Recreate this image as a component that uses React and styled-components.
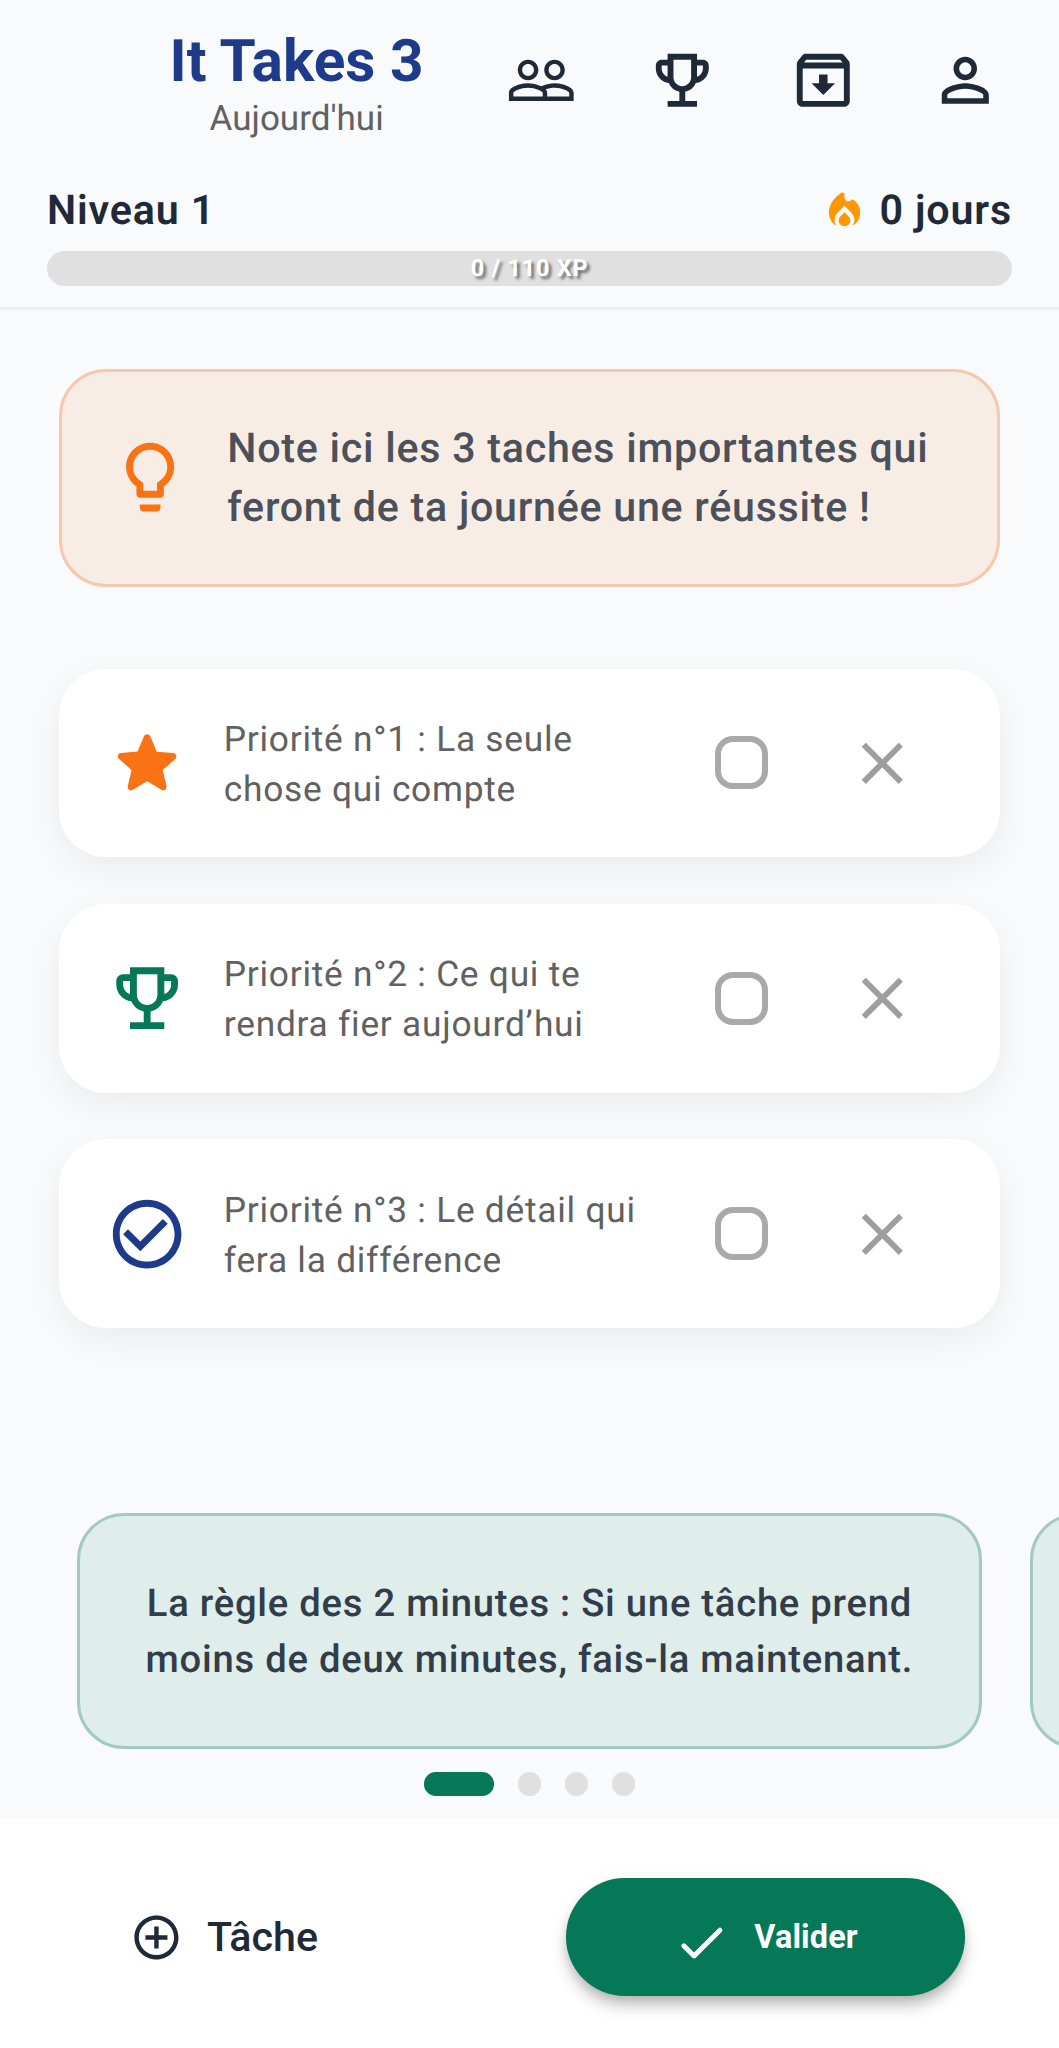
import React from "react";
import styled, { createGlobalStyle } from "styled-components";
import {
  MdPeopleOutline,
  MdOutlineEmojiEvents,
  MdOutlineArchive,
  MdPersonOutline,
  MdLightbulbOutline,
  MdCheckCircleOutline,
  MdClose,
  MdAddCircleOutline,
} from "react-icons/md";

const color = {
  page: "#f9fafc",
  ink: "#1f2937",
  blue: "#1e3a8a",
  green: "#047857",
  orange: "#f97316",
  muted: "#616161",
  track: "#e0e0e0",
};

const GlobalStyle = createGlobalStyle`
  *, *::before, *::after { box-sizing: border-box; }
  body {
    margin: 0;
    background: ${color.page};
    color: ${color.ink};
    font-family: Roboto, "Liberation Sans", sans-serif;
    text-rendering: geometricPrecision;
  }
  svg { display: block; flex: none; }
  button {
    border: 0;
    padding: 0;
    background: none;
    color: inherit;
    font: inherit;
  }
`;

const Screen = styled.div`
  display: flex;
  flex-direction: column;
  width: 100%;
  height: 2048px;
  overflow: hidden;
`;

const Header = styled.header`
  flex: none;
  height: 310px;
  border-bottom: 3px solid #eceef0;
`;

const TopBar = styled.div`
  display: flex;
  align-items: center;
  justify-content: space-between;
  height: 161px;
  padding-right: 23.5px;
`;

const TitleBlock = styled.div`
  flex: 1;
  display: flex;
  flex-direction: column;
  align-items: center;
  padding: 8.5px 0 0 122.5px;
`;

const Title = styled.h1`
  margin: 0;
  font-size: 58.6px;
  line-height: 69px;
  font-weight: 700;
  color: ${color.blue};
`;

const Subtitle = styled.div`
  margin-top: -1.5px;
  font-size: 35px;
  line-height: 47px;
  color: ${color.muted};
`;

const Actions = styled.nav`
  display: flex;
`;

const IconButton = styled.button`
  display: flex;
  align-items: center;
  justify-content: center;
  width: 141.2px;
  height: 141.2px;
  color: ${(p) => p.$color || color.ink};
`;

const Progress = styled.div`
  padding: 25.5px 47px 0;
`;

const ProgressLabels = styled.div`
  display: flex;
  justify-content: space-between;
  font-size: 41.2px;
  line-height: 48px;
  font-weight: 600;
  letter-spacing: 0.85px;
`;

const Streak = styled.div`
  display: flex;
  align-items: center;
  gap: 11.5px;
`;

const XpTrack = styled.div`
  display: flex;
  align-items: center;
  justify-content: center;
  height: 35.3px;
  margin-top: 16.3px;
  border-radius: 17.6px;
  background: ${color.track};
  color: #fff;
  font-size: 23.5px;
  font-weight: 700;
  letter-spacing: 0.74px;
  text-shadow: 3px 3px 3px rgba(0, 0, 0, 0.5);
`;

const Main = styled.main`
  flex: 1;
  display: flex;
  flex-direction: column;
  min-height: 0;
`;

const Hint = styled.section`
  display: flex;
  align-items: center;
  gap: 36px;
  height: 218px;
  margin: 58.5px 59px 0;
  padding: 0 47px;
  border: 3px solid #f5c9ab;
  border-radius: 47px;
  background: #f8ede5;
  color: ${color.orange};
`;

const HintText = styled.p`
  margin: 0;
  padding-top: 2.4px;
  color: #4b505a;
  font-size: 41.2px;
  line-height: 58.8px;
  font-weight: 500;
  letter-spacing: 0.735px;
`;

const TaskList = styled.ul`
  display: flex;
  flex-direction: column;
  gap: 46.8px;
  margin: 82px 59px 0;
  padding: 0;
  list-style: none;
`;

const TaskCard = styled.li`
  display: flex;
  align-items: center;
  height: 188.7px;
  padding: 0 47px;
  border-radius: 47px;
  background: #fff;
  color: ${(p) => p.$accent};
  box-shadow: 0 12px 36px rgba(0, 0, 0, 0.06);
`;

const TaskTextBox = styled.div`
  flex: 1;
  padding: 2px 0 0 35.5px;
`;

const TaskText = styled.div`
  max-width: 424px;
  color: ${color.muted};
  font-size: 35.3px;
  line-height: 50px;
  letter-spacing: 0.75px;
`;

const CheckArea = styled.div`
  display: flex;
  align-items: center;
  justify-content: center;
  width: 141.2px;
  height: 141.2px;
`;

const CheckBox = styled.span`
  width: 53px;
  height: 53px;
  border: 6px solid #a9a9a9;
  border-radius: 18px;
`;

const Carousel = styled.section`
  display: flex;
  gap: 47.4px;
  margin-top: 184.8px;
  padding-left: 76.5px;
  overflow: hidden;
`;

const Slide = styled.article`
  flex: none;
  display: flex;
  align-items: center;
  justify-content: center;
  width: 905.8px;
  height: 236px;
  padding: 1.6px 47px 0;
  border: 3px solid #a2cabf;
  border-radius: 47px;
  background: #dfeeea;
  color: #323d49;
  font-size: 38.2px;
  line-height: 56px;
  font-weight: 500;
  letter-spacing: 0.765px;
  text-align: center;
`;

const Dots = styled.div`
  display: flex;
  justify-content: center;
  gap: 23.5px;
  margin-top: 23.3px;
`;

const Dot = styled.span`
  width: ${(p) => (p.$active ? "70.6px" : "23.5px")};
  height: 23.5px;
  border-radius: 11.8px;
  background: ${(p) => (p.$active ? color.green : color.track)};
`;

const BottomBar = styled.footer`
  flex: none;
  display: flex;
  align-items: center;
  justify-content: space-between;
  height: 228.7px;
  padding: 7px 94.3px 0 129.5px;
  background: #fff;
`;

const AddTask = styled.button`
  display: flex;
  align-items: center;
  gap: 24.5px;
  height: 117.6px;
  font-size: 41.2px;
  font-weight: 500;
`;

const Validate = styled.button`
  display: flex;
  align-items: center;
  justify-content: center;
  gap: 24px;
  width: 399px;
  height: 117.6px;
  padding-right: 1px;
  border-radius: 58.8px;
  background: ${color.green};
  color: #fff;
  font-size: 32.4px;
  font-weight: 700;
  letter-spacing: 0.15px;
  box-shadow: 0 6px 12px -3px rgba(0, 0, 0, 0.2),
    0 12px 15px rgba(0, 0, 0, 0.14), 0 3px 24px rgba(0, 0, 0, 0.04);
`;

const CheckGlyph = styled.svg`
  margin-top: 11px;
`;

const FlameIcon = () => (
  <svg width="47" height="47" viewBox="0 0 24 24" fill="#ff9800">
    <path d="M12 12.9l-2.03 2c-.46.46-.82 1.03-.93 1.67C8.74 18.41 10.18 20 12 20s3.26-1.59 2.96-3.42c-.11-.64-.46-1.22-.93-1.67L12 12.9z" />
    <path d="M15.56 6.55C14.38 8.02 12 7.19 12 5.3V3.77c0-.8-.89-1.28-1.55-.84C8.12 4.49 4 8.02 4 13c0 2.92 1.56 5.47 3.89 6.86-.79-1.16-1.15-2.61-.83-4.15.22-1.05.78-2 1.55-2.75L12 9.6l3.39 3.36c.77.75 1.33 1.71 1.55 2.76.32 1.53-.04 2.98-.83 4.13C18.44 18.46 20 15.92 20 13c0-2.36-1.1-4.59-2.84-6.06-.47-.4-1.2-.88-1.6-.39z" />
  </svg>
);

const StarIcon = () => (
  <svg width="82.3" height="82.3" viewBox="0 0 24 24" fill="currentColor">
    <path d="M12 17.27l4.15 2.51c.76.46 1.69-.22 1.49-1.08l-1.1-4.72 3.67-3.18c.67-.58.31-1.68-.57-1.75l-4.83-.41-1.89-4.46c-.34-.81-1.5-.81-1.84 0L9.19 8.63l-4.83.41c-.88.07-1.24 1.17-.57 1.75l3.67 3.18-1.1 4.72c-.2.86.73 1.54 1.49 1.08l4.15-2.5z" />
  </svg>
);

const CheckIcon = () => (
  <CheckGlyph width="58.8" height="58.8" viewBox="0 0 24 24" fill="currentColor">
    <path d="M9 16.17L5.53 12.7a.9959.9959 0 0 0-1.41 0c-.39.39-.39 1.02 0 1.41l4.18 4.18c.39.39 1.02.39 1.41 0L20.29 7.71c.39-.39.39-1.02 0-1.41a.9959.9959 0 0 0-1.41 0L9 16.17z" />
  </CheckGlyph>
);

const tasks = [
  { text: "Priorité n°1 : La seule chose qui compte", accent: color.orange, icon: <StarIcon /> },
  { text: "Priorité n°2 : Ce qui te rendra fier aujourd’hui", accent: color.green, icon: <MdOutlineEmojiEvents size={82.3} /> },
  { text: "Priorité n°3 : Le détail qui fera la différence", accent: color.blue, icon: <MdCheckCircleOutline size={82.3} /> },
];

const slides = [
  "La règle des 2 minutes : Si une tâche prend moins de deux minutes, fais-la maintenant.",
  "",
];

export default function App() {
  return (
    <>
      <GlobalStyle />
      <Screen>
        <Header>
          <TopBar>
            <TitleBlock>
              <Title>It Takes 3</Title>
              <Subtitle>Aujourd'hui</Subtitle>
            </TitleBlock>
            <Actions>
              {[MdPeopleOutline, MdOutlineEmojiEvents, MdOutlineArchive, MdPersonOutline].map((Icon, i) => (
                <IconButton key={i}>
                  <Icon size={70.6} />
                </IconButton>
              ))}
            </Actions>
          </TopBar>
          <Progress>
            <ProgressLabels>
              <span>Niveau 1</span>
              <Streak>
                <FlameIcon />
                <span>0 jours</span>
              </Streak>
            </ProgressLabels>
            <XpTrack>0 / 110 XP</XpTrack>
          </Progress>
        </Header>

        <Main>
          <Hint>
            <MdLightbulbOutline size={82.3} />
            <HintText>Note ici les 3 taches importantes qui feront de ta journée une réussite !</HintText>
          </Hint>

          <TaskList>
            {tasks.map((task) => (
              <TaskCard key={task.text} $accent={task.accent}>
                {task.icon}
                <TaskTextBox>
                  <TaskText>{task.text}</TaskText>
                </TaskTextBox>
                <CheckArea>
                  <CheckBox />
                </CheckArea>
                <IconButton $color="#9e9e9e">
                  <MdClose size={70.6} />
                </IconButton>
              </TaskCard>
            ))}
          </TaskList>

          <Carousel>
            {slides.map((text, i) => (
              <Slide key={i}>{text}</Slide>
            ))}
          </Carousel>
          <Dots>
            {[0, 1, 2, 3].map((i) => (
              <Dot key={i} $active={i === 0} />
            ))}
          </Dots>
        </Main>

        <BottomBar>
          <AddTask>
            <MdAddCircleOutline size={52.9} />
            <span>Tâche</span>
          </AddTask>
          <Validate>
            <CheckIcon />
            <span>Valider</span>
          </Validate>
        </BottomBar>
      </Screen>
    </>
  );
}
